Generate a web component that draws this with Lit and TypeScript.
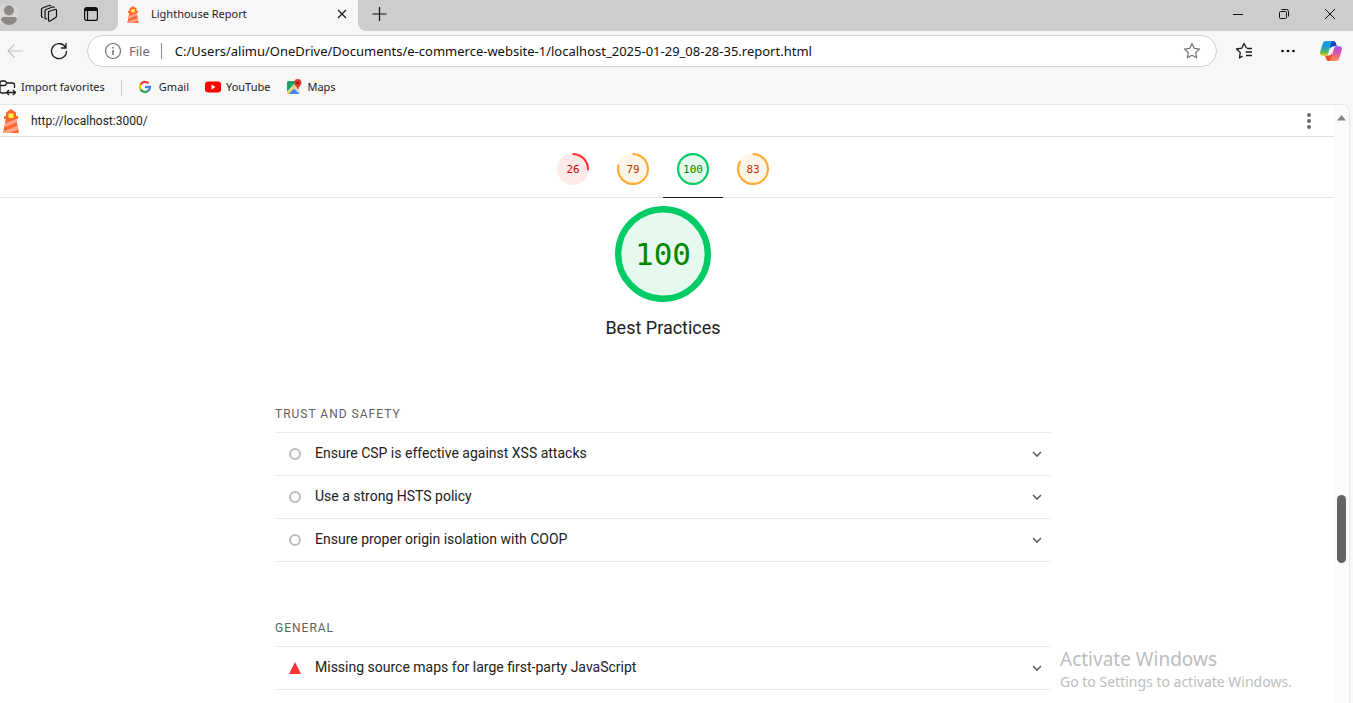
import { LitElement, html, css, svg, nothing } from "lit";
import { customElement, property } from "lit/decorators.js";
import { classMap } from "lit/directives/class-map.js";

type Rating = "pass" | "average" | "fail";

interface Score {
  label: string;
  value: number;
  rating: Rating;
  current?: boolean;
}

interface Audit {
  title: string;
  state: "info" | "fail";
}

interface AuditGroup {
  title: string;
  audits: Audit[];
}

const SCORES: Score[] = [
  { label: "Performance", value: 26, rating: "fail" },
  { label: "Accessibility", value: 79, rating: "average" },
  { label: "Best Practices", value: 100, rating: "pass", current: true },
  { label: "SEO", value: 83, rating: "average" },
];

const GROUPS: AuditGroup[] = [
  {
    title: "Trust and Safety",
    audits: [
      { title: "Ensure CSP is effective against XSS attacks", state: "info" },
      { title: "Use a strong HSTS policy", state: "info" },
      { title: "Ensure proper origin isolation with COOP", state: "info" },
    ],
  },
  {
    title: "General",
    audits: [{ title: "Missing source maps for large first-party JavaScript", state: "fail" }],
  },
];

const lighthouse = (w: number, h: number) => html`
  <svg width=${w} height=${h} viewBox="0 0 16 24" aria-hidden="true">
    <path fill="#ff6633" d="M8 0 13 3.500V7h2v3h-1.800L16 24H0l2.800-14H1V7h2V3.500z" />
    <path fill="#ffa385" d="M2 14.500 13.300 10l.6 3.200L1.200 18.600zM.4 22.300l14.300-5.600.8 3.700L7 24H0z" />
    <path fill="#fff23a" d="M5.500 4.500h5v4.500h-5z" />
  </svg>
`;

@customElement("score-gauge")
class ScoreGauge extends LitElement {
  @property({ type: Number }) value = 0;
  @property() rating: Rating = "pass";
  @property({ type: Boolean, reflect: true }) large = false;

  static styles = css`
    :host {
      display: grid;
      width: 32px;
      height: 32px;
      font: 11px "DejaVu Sans Mono", monospace;
    }
    :host([large]) {
      width: 96px;
      height: 96px;
      font-size: 31px;
    }
    .ring,
    .value {
      grid-area: 1 / 1;
    }
    .ring {
      width: 100%;
      height: 100%;
    }
    .value {
      place-self: center;
    }
    .pass { color: #008800; --arc: #00cc66; --disc: #e5f9ef; }
    .average { color: #c33300; --arc: #ffaa33; --disc: #fff6ea; }
    .fail { color: #cc0000; --arc: #ff3333; --disc: #ffeaea; }
    .gauge { display: grid; }
    .disc { fill: var(--disc); }
    .arc {
      fill: none;
      stroke: var(--arc);
      stroke-width: 8;
      stroke-linecap: round;
    }
  `;

  render() {
    const length = 2 * Math.PI * 56;
    const filled = this.value >= 100 ? length : (this.value / 100) * length - 4;
    return html`
      <span class="gauge ${this.rating}">
        <svg class="ring" viewBox="0 0 120 120" aria-hidden="true">
          <circle class="disc" cx="60" cy="60" r="60" />
          <circle class="arc" cx="60" cy="60" r="56" transform="rotate(-88 60 60)"
            stroke-dasharray="${filled} ${length}" />
        </svg>
        <span class="value">${this.value}</span>
      </span>
    `;
  }
}

@customElement("browser-chrome")
class BrowserChrome extends LitElement {
  static styles = css`
    :host {
      display: block;
      background: #f7f7f7;
      color: #1b1b1b;
      font: 12px/16px "Noto Sans", "Open Sans", sans-serif;
    }
    button {
      display: grid;
      place-items: center;
      padding: 0;
      border: 0;
      background: none;
      color: inherit;
    }
    svg { display: block; }
    .line { fill: none; stroke: currentColor; }
    .strip { display: flex; height: 31px; }
    .left, .right { display: flex; align-items: center; background: #cdcdcd; color: #111; }
    .left {
      width: 126px;
      box-sizing: border-box;
      padding: 0 16px 3px 5px;
      gap: 20px;
      border-bottom-right-radius: 8px;
    }
    .right { flex: 1; padding: 0 0 3px 10px; border-bottom-left-radius: 8px; }
    .tab {
      display: flex;
      align-items: center;
      width: 240px;
      box-sizing: border-box;
      padding: 0 8px 3px;
      gap: 11px;
      color: #1b1b1b;
    }
    .title { flex: 1; font-size: 11px; }
    .controls { display: flex; margin-left: auto; }
    .controls button { width: 46px; height: 28px; }
    .toolbar { display: flex; align-items: center; height: 40px; padding: 0 11px 0 11px; }
    .nav { width: 24px; height: 24px; margin-right: 20px; }
    .nav + .nav { margin-right: 16px; }
    .back { color: #c4c4c4; }
    .address {
      display: flex;
      align-items: center;
      flex: 1;
      height: 30px;
      padding: 0 15px 0 16px;
      margin-right: 15px;
      border: 1px solid #cfcfcf;
      border-radius: 16px;
      background: #fff;
    }
    .scheme {
      padding: 0 11px 0 7px;
      margin-right: 13px;
      border-right: 1px solid #8a8a8a;
      color: #6b6b6b;
      font-size: 13px;
    }
    .url {
      flex: 1;
      min-width: 0;
      padding: 0;
      border: 0;
      outline: 0;
      background: none;
      color: #111;
      font: 13px/20px "Noto Sans", "Open Sans", sans-serif;
    }
    .muted { color: #707070; }
    .actions { display: flex; align-items: center; gap: 20px; }
    .actions button { width: 24px; height: 24px; }
    .actions .copilot { width: 22px; }
    .favorites { display: flex; align-items: center; height: 33px; padding: 0 0 0 7px; font-size: 11px; }
    .favorite {
      display: flex;
      align-items: center;
      gap: 5px;
      margin-right: 16px;
      padding-bottom: 1px;
      color: inherit;
      text-decoration: none;
    }
    .divider { width: 1px; height: 16px; margin-right: 15px; background: #cccccc; }
    .gmail { gap: 6px; }
  `;

  render() {
    return html`
      <div class="strip">
        <div class="left">
          <button aria-label="Profile">
            <svg width="22" height="24" viewBox="0 0 22 24">
              <circle cx="11" cy="12.500" r="11" fill="#d8d5d2" />
              <circle cx="12" cy="8.500" r="5" fill="#8c8885" />
              <path fill="#8c8885" d="M4 18q0-3 3-3h10q3 0 3 3-3 5-8 5t-8-5z" />
            </svg>
          </button>
          <button aria-label="Workspaces">
            <svg class="line" width="20" height="20" viewBox="2 0 20 20" stroke-width="1.200" stroke-linejoin="round">
              <path d="M11.500 7.500 18 5.500q1.500-.4 1.500 1V12q0 1-.8 1.500L13 17q-1.500.8-1.500-1V8.500z" />
              <path d="M9 14.500 8 15q-1 0-1-1V7q0-1 1-1.500L14.500 3q1.500-.4 1.800.8" transform="translate(1 0)" />
              <path d="M5.600 12.600 5 12.800q-1-.2-1-1.200V5q0-1 1-1.500L11.500 1q1.300-.4 1.700.7" transform="translate(.5 .5)" />
            </svg>
          </button>
          <button aria-label="Tab actions">
            <svg class="line" width="24" height="16" viewBox="-4 0 24 16" stroke-width="1.200">
              <rect x="1.600" y="1.600" width="12.800" height="12.800" rx="2" />
              <path d="M2 3.500h12" stroke-width="3" />
              <path d="M4.500 5v9" />
            </svg>
          </button>
        </div>
        <div class="tab">
          ${lighthouse(14, 17)}
          <span class="title">Lighthouse Report</span>
          <button aria-label="Close tab">
            <svg class="line" width="16" height="16" viewBox="0 0 16 16" stroke-width="1.300"><path d="m4 4 8 8m0-8-8 8" /></svg>
          </button>
        </div>
        <div class="right">
          <button aria-label="New tab">
            <svg class="line" width="24" height="16" viewBox="0 0 24 16" stroke-width="1.200"><path d="M11.500 1v14m-7-7h14" /></svg>
          </button>
          <div class="controls">
            <button aria-label="Minimize">
              <svg class="line" width="12" height="12" viewBox="0 0 12 12"><path d="M1 6.500h10" /></svg>
            </button>
            <button aria-label="Restore">
              <svg class="line" width="12" height="12" viewBox="0 0 12 12">
                <rect x="1.500" y="3.500" width="7" height="7" rx="1" /><path d="M3.500 1.500h5q2 0 2 2v5" />
              </svg>
            </button>
            <button aria-label="Close window">
              <svg class="line" width="12" height="12" viewBox="0 0 12 12"><path d="m1 1 10 10m0-10L1 11" /></svg>
            </button>
          </div>
        </div>
      </div>

      <div class="toolbar">
        <button class="nav back" aria-label="Back">
          <svg class="line" width="20" height="18" viewBox="0 0 20 18" stroke-width="1.200"><path d="M18 9H3m6.500-6.500L3 9l6.500 6.500" /></svg>
        </button>
        <button class="nav" aria-label="Refresh">
          <svg class="line" width="20" height="20" viewBox="0 0 20 20" stroke-width="1.300">
            <path d="M16.800 7A7.500 7.500 0 1 0 17.500 10M17 2v5h-5" />
          </svg>
        </button>
        <div class="address">
          <svg class="line muted" width="18" height="18" viewBox="0 0 18 18" stroke-width="1.200">
            <circle cx="9" cy="9" r="7.500" /><path d="M9 8v5M9 5v1.500" stroke-width="1.500" />
          </svg>
          <span class="scheme">File</span>
          <input class="url" aria-label="Address" spellcheck="false"
            .value=${"C:/Users/alimu/OneDrive/Documents/e-commerce-website-1/localhost_2025-01-29_08-28-35.report.html"} />
          <button class="muted" aria-label="Add to favorites">
            <svg class="line" width="18" height="18" viewBox="0 0 18 18" stroke-width="1.200" stroke-linejoin="round">
              <path d="m9 1.500 2.300 4.800 5.200.7-3.800 3.600.9 5.200L9 13.300l-4.600 2.500.9-5.200L1.500 7l5.200-.7z" />
            </svg>
          </button>
        </div>
        <div class="actions">
          <button aria-label="Favorites">
            <svg class="line" width="18" height="18" viewBox="0 0 18 18" stroke-width="1.300" stroke-linejoin="round">
              <path d="M11.500 6.200 9 1.500 6.800 6.200 1.500 7l3.800 3.600-.9 5.200L7.500 14.200M12 6.500h5M10.500 10H17M11 13.500h6" />
            </svg>
          </button>
          <button aria-label="More">
            <svg width="16" height="16" viewBox="0 0 16 16">
              <circle cx="2.500" cy="8" r="1.300" /><circle cx="8" cy="8" r="1.300" /><circle cx="13.500" cy="8" r="1.300" />
            </svg>
          </button>
          <button class="copilot" aria-label="Copilot">
            <svg width="22" height="20" viewBox="0 0 22 20">
              <defs>
                <linearGradient id="cool" x1="0" y1="0" x2="0" y2="1">
                  <stop offset="0" stop-color="#159bea" /><stop offset=".4" stop-color="#1c98d2" />
                  <stop offset=".75" stop-color="#59b955" /><stop offset="1" stop-color="#f0cb18" />
                </linearGradient>
                <linearGradient id="warm" x1="0" y1="0" x2="0" y2="1">
                  <stop offset="0" stop-color="#9a54e8" /><stop offset=".5" stop-color="#e557a0" />
                  <stop offset="1" stop-color="#ff9550" />
                </linearGradient>
              </defs>
              <path fill="#1746c7" d="M9 0h4.500q1.800 0 2.400 2l1 3.200h-3.500q-2 0-3 2.500z" />
              <path fill="#f04d24" d="M5 14.500h4q1.500 0 2.600-2.500L13 20H8.500q-1.800 0-2.400-2z" />
              <path fill="url(#cool)" d="M5.500 0H13q-1.500.4-2 2.200L8.300 12q-.8 2.700-3 2.700H3Q-.6 14.700.2 11L2.600 2.700Q3.400 0 5.500 0z" />
              <path fill="url(#warm)" d="M16.500 20H9q1.500-.4 2-2.200L13.700 8q.8-2.700 3-2.700H19q3.600 0 2.800 3.700l-2.400 8.300Q18.600 20 16.500 20z" />
              <path fill="#f7f7f7" d="M11.500 6h2.300q-.8 1-1.200 2.300L10.700 14H8.200q.8-1 1.200-2.300L11 7z" />
            </svg>
          </button>
        </div>
      </div>

      <nav class="favorites" aria-label="Favorites">
        <a class="favorite" href="#import">
          <svg class="line" width="17" height="18" viewBox="0 0 17 18" stroke-width="1.300" stroke-linejoin="round">
            <path d="M7 15H3q-2 0-2-2V5q0-2 2-2h3l2 2h5.500q2 0 2 2v3M1 7.500h5L8 5M8 14.500h8M10 12l-2.500 2.500L10 17M14 12l2.500 2.500L14 17" />
          </svg>
          Import favorites
        </a>
        <span class="divider"></span>
        <a class="favorite gmail" href="#gmail">
          <svg width="16" height="16" viewBox="0 0 16 16">
            <circle cx="8" cy="8" r="8" fill="#fff" />
            <g fill="none" stroke-width="2.300">
              <path stroke="#ea4335" d="M3.500 5.600A5 5 0 0 1 11.600 4.500" />
              <path stroke="#fbbc05" d="M3.500 5.600a5 5 0 0 0 0 4.800" />
              <path stroke="#34a853" d="M3.500 10.400a5 5 0 0 0 7.800 1.300" />
              <path stroke="#4285f4" d="M11.300 11.700A5 5 0 0 0 13 8H8" />
            </g>
          </svg>
          Gmail
        </a>
        <a class="favorite" href="#youtube">
          <svg width="16" height="16" viewBox="0 0 16 16">
            <rect y="2.500" width="16" height="11" rx="3" fill="#f00" /><path fill="#fff" d="m6.500 5.600 4 2.400-4 2.400z" />
          </svg>
          YouTube
        </a>
        <a class="favorite" href="#maps">
          <svg width="16" height="16" viewBox="0 0 16 16">
            <rect x="1" y="2" width="13" height="13" rx="1.500" fill="#ddd" />
            <path fill="#1fa463" d="M1 3.500Q1 2 2.500 2H11L1 12.500z" />
            <path fill="#4285f4" d="M2.500 15 8 9.500l5.500 5.500z" />
            <path stroke="#ffd04b" stroke-width="1.800" d="m1.500 14.500 9-9" />
            <path fill="#e13b30" d="M11.700 0Q15.500.2 15.500 4c0 2.500-2.800 3-3.700 7-.8-4-3.700-4.500-3.700-7Q8.100.2 11.700 0z" />
            <circle cx="11.700" cy="3.800" r="1.300" fill="#7d1b14" />
          </svg>
          Maps
        </a>
      </nav>
    `;
  }
}

@customElement("audit-group")
class AuditGroupElement extends LitElement {
  @property({ attribute: false }) group!: AuditGroup;

  static styles = css`
    :host { display: block; }
    .title {
      margin: 0;
      padding-bottom: 9px;
      border-bottom: 1px solid #ebebeb;
      color: #616161;
      font-size: 12px;
      font-weight: 400;
      line-height: 18px;
      letter-spacing: 1px;
      text-transform: uppercase;
    }
    .audit { border-bottom: 1px solid #ebebeb; }
    .summary {
      display: flex;
      align-items: center;
      height: 42px;
      padding: 0 8px 0 14px;
      list-style: none;
      cursor: pointer;
    }
    .icon { margin-right: 14px; }
    .text { flex: 1; line-height: 20px; padding-bottom: 2px; }
    .chevron { fill: none; stroke: #616161; stroke-width: 1.600; }
  `;

  render() {
    return html`
      <h2 class="title">${this.group.title}</h2>
      ${this.group.audits.map(
        (audit) => html`
          <details class="audit">
            <summary class="summary">
              <svg class="icon" width="12" height="12" viewBox="0 0 12 12" aria-hidden="true">
                ${audit.state === "fail"
                  ? svg`<path fill="#ff3333" d="M6 0l6 12H0z" />`
                  : svg`<circle cx="6" cy="6" r="5" fill="none" stroke="#bdbdbd" stroke-width="2" />`}
              </svg>
              <span class="text">${audit.title}</span>
              <svg class="chevron" width="12" height="12" viewBox="0 0 12 12" aria-hidden="true"><path d="m2 4 4 4 4-4" /></svg>
            </summary>
          </details>
        `,
      )}
    `;
  }
}

@customElement("app-root")
class AppRoot extends LitElement {
  static styles = css`
    :host {
      display: block;
      height: 100vh;
      overflow: hidden;
      background: #f7f7f7;
      color: #212121;
      font: 14px/20px Roboto, "Liberation Sans", sans-serif;
    }
    .window {
      display: flex;
      flex-direction: column;
      height: 100%;
      margin-left: -8px;
    }
    .viewport {
      display: flex;
      flex: 1;
      min-height: 0;
      margin-right: 3px;
      border: 1px solid #e6e6e6;
      border-width: 1px 1px 0 0;
      border-top-right-radius: 8px;
      overflow: hidden;
      background: #fff;
    }
    .report { flex: 1; overflow: hidden; }
    .topbar {
      display: flex;
      align-items: center;
      height: 31px;
      padding: 0 16px 0 11px;
      border-bottom: 1px solid #e0e0e0;
    }
    .topbar svg { display: block; }
    .site {
      flex: 1;
      margin-left: 12px;
      color: #212121;
      font-size: 12px;
      text-decoration: none;
    }
    .menu { padding: 0; border: 0; background: none; }
    .scores {
      display: flex;
      justify-content: center;
      height: 60px;
      border-bottom: 1px solid #e0e0e0;
    }
    .score {
      display: grid;
      justify-items: center;
      width: 60px;
      height: 60px;
      padding-top: 16px;
      box-sizing: border-box;
      text-decoration: none;
    }
    .current { height: 61px; border-bottom: 1px solid #212121; }
    .category {
      display: flex;
      flex-direction: column;
      align-items: center;
      gap: 14px;
      padding-top: 8px;
    }
    .name { margin: 0; font-size: 18px; font-weight: 400; line-height: 24px; }
    .groups {
      display: grid;
      gap: 57px;
      max-width: 776px;
      margin: 0 auto;
      padding-top: 65px;
    }
    .scrollbar {
      display: flex;
      flex-direction: column;
      align-items: center;
      width: 15px;
      padding-top: 10px;
      box-sizing: border-box;
      background: #fbfbfb;
    }
    .before { flex: 371; }
    .thumb { flex: 68; width: 9px; border-radius: 5px; background: #636363; }
    .after { flex: 139; }
    .watermark {
      position: absolute;
      right: 57px;
      bottom: 11px;
      width: 236px;
      color: #bdbdbd;
      font: 14px/20px "Noto Sans", "Open Sans", sans-serif;
      white-space: nowrap;
      pointer-events: none;
    }
    .activate { margin: 0; font-size: 19px; line-height: 26px; }
    .hint { margin: 0; }
  `;

  render() {
    const current = SCORES.find((score) => score.current)!;
    return html`
      <div class="window">
        <browser-chrome></browser-chrome>
        <div class="viewport">
          <main class="report">
            <header class="topbar">
              ${lighthouse(16, 24)}
              <a class="site" href="#site">http://localhost:3000/</a>
              <button class="menu" aria-label="Tools menu">
                <svg width="18" height="20" viewBox="0 0 18 20" fill="#6b6b6b">
                  <circle cx="9" cy="4" r="2" /><circle cx="9" cy="10" r="2" /><circle cx="9" cy="16" r="2" />
                </svg>
              </button>
            </header>
            <nav class="scores" aria-label="Categories">
              ${SCORES.map(
                (score) => html`
                  <a class=${classMap({ score: true, current: !!score.current })} href="#category"
                    aria-label=${score.label} aria-current=${score.current ? "true" : nothing}>
                    <score-gauge .value=${score.value} .rating=${score.rating}></score-gauge>
                  </a>
                `,
              )}
            </nav>
            <section class="category">
              <score-gauge large .value=${current.value} .rating=${current.rating}></score-gauge>
              <h1 class="name">${current.label}</h1>
            </section>
            <div class="groups">
              ${GROUPS.map((group) => html`<audit-group .group=${group}></audit-group>`)}
            </div>
          </main>
          <div class="scrollbar" aria-hidden="true">
            <svg width="9" height="6" viewBox="0 0 9 6"><path fill="#858585" d="M4.500 0 9 5.500H0z" /></svg>
            <span class="before"></span>
            <span class="thumb"></span>
            <span class="after"></span>
          </div>
        </div>
      </div>
      <aside class="watermark">
        <p class="activate">Activate Windows</p>
        <p class="hint">Go to Settings to activate Windows.</p>
      </aside>
    `;
  }
}
